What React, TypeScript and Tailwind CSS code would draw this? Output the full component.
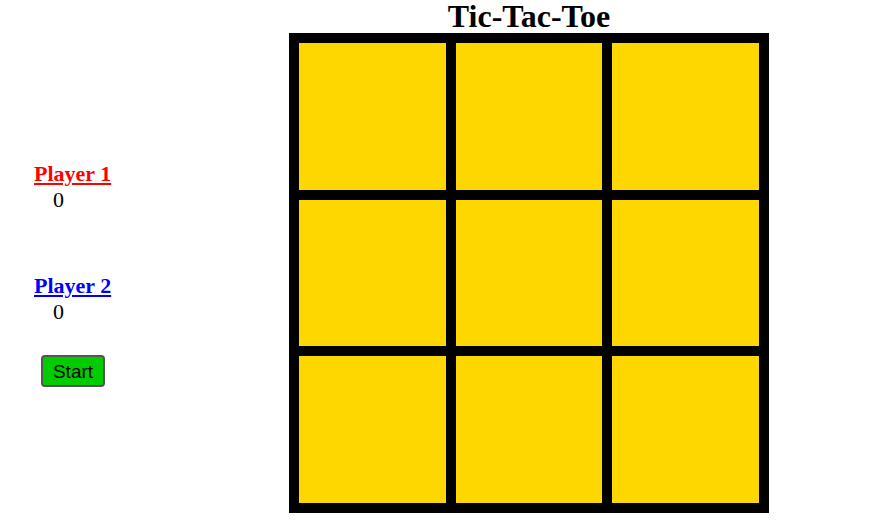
import { useState } from "react";

type Cell = "X" | "O" | null;

export default function App() {
	const [cells, setCells] = useState<Cell[]>(Array(9).fill(null));
	const [turn, setTurn] = useState<"X" | "O">("X");
	const [scores] = useState({ p1: 0, p2: 0 });

	const handleClick = (i: number) => {
		if (cells[i]) return;
		const next = [...cells];
		next[i] = turn;
		setCells(next);
		setTurn(turn === "X" ? "O" : "X");
	};

	const handleStart = () => {
		setCells(Array(9).fill(null));
		setTurn("X");
	};

	return (
		<div className="flex bg-white min-h-[529px] font-['Liberation_Serif',serif] text-black">
			<div className="w-[289px] pl-[34px] pt-[161px]">
				<div className="text-[22px] leading-[26px] font-bold underline text-[#ff0000]">
					Player 1
				</div>
				<div className="text-[22px] leading-[26px] pl-[19px]">{scores.p1}</div>
				<div className="mt-[60px] text-[22px] leading-[26px] font-bold underline text-[#0000ff]">
					Player 2
				</div>
				<div className="text-[22px] leading-[26px] pl-[19px]">{scores.p2}</div>
				<button
					type="button"
					onClick={handleStart}
					className="mt-[30px] ml-[7px] w-[64px] h-[32px] rounded-[4px] border-2 border-[#555] bg-[#00cc00] font-['Liberation_Sans',sans-serif] text-[19px] leading-none"
				>
					Start
				</button>
			</div>
			<div className="w-[480px]">
				<h1 className="text-center text-[32px] leading-[33px] font-bold">
					Tic-Tac-Toe
				</h1>
				<div className="grid grid-cols-3 gap-[10px] p-[10px] bg-black w-[480px] h-[480px]">
					{cells.map((c, i) => (
						<button
							type="button"
							key={i}
							onClick={() => handleClick(i)}
							className="bg-[#ffd700] flex items-center justify-center text-[80px] font-bold"
						>
							{c}
						</button>
					))}
				</div>
			</div>
		</div>
	);
}
